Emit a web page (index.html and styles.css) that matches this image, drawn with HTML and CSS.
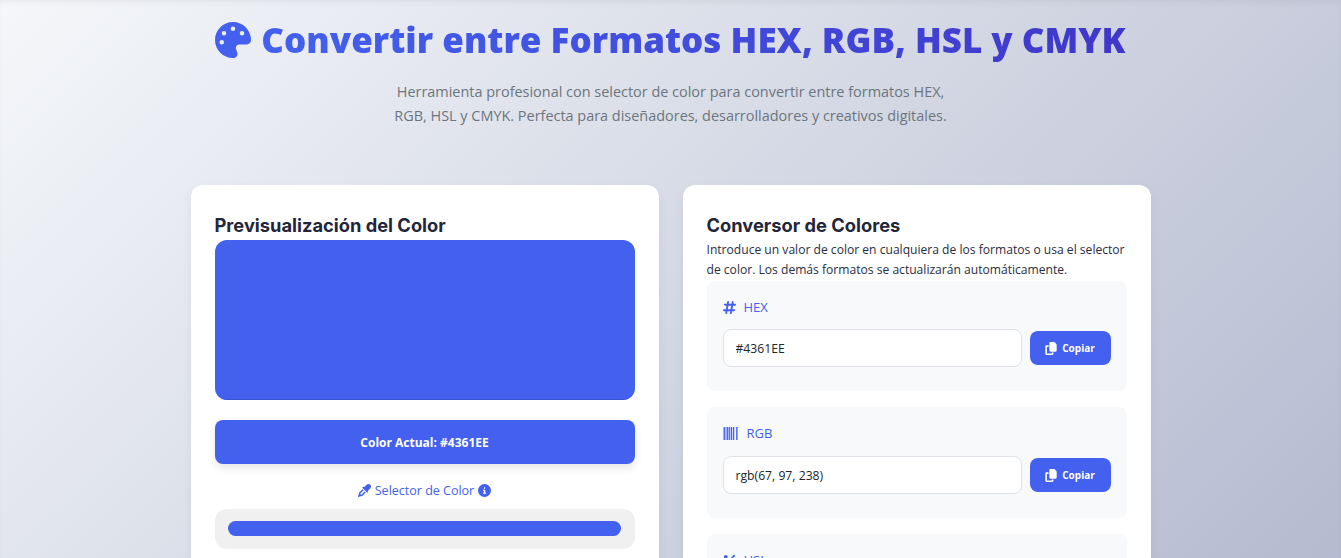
FILE: index.html
```html
<!DOCTYPE html>
<html lang="es">
<head>
    <meta charset="UTF-8">
    <meta name="viewport" content="width=device-width, initial-scale=1.0">
    <title>Convertir entre Formatos HEX, RGB, HSL y CMYK</title>
    <link rel="stylesheet" href="styles.css">
</head>
<body>
    <header class="page-header">
        <h1>
            <svg class="title-icon" viewBox="0 0 512 512" aria-hidden="true"><path d="M512 256c0 .9 0 1.8 0 2.7c-.4 36.5-33.6 61.3-70.1 61.3H344c-26.5 0-48 21.5-48 48c0 3.4 .4 6.7 1 9.9c2.1 10.2 6.5 20 10.8 29.9c6.1 13.8 12.1 27.5 12.1 42c0 31.8-21.6 60.7-53.4 62c-3.5 .1-7 .2-10.6 .2C114.6 512 0 397.4 0 256S114.6 0 256 0S512 114.6 512 256zM128 288a32 32 0 1 0 -64 0 32 32 0 1 0 64 0zm0-96a32 32 0 1 0 0-64 32 32 0 1 0 0 64zM288 96a32 32 0 1 0 -64 0 32 32 0 1 0 64 0zm96 96a32 32 0 1 0 0-64 32 32 0 1 0 0 64z"/></svg>
            <span class="title-text">Convertir entre Formatos HEX, RGB, HSL y CMYK</span>
        </h1>
        <p>Herramienta profesional con selector de color para convertir entre formatos HEX, RGB, HSL y CMYK. Perfecta para diseñadores, desarrolladores y creativos digitales.</p>
    </header>

    <main class="container">
        <section class="card">
            <h2>Previsualización del Color</h2>
            <div class="color-preview"></div>
            <div class="color-current">Color Actual: #4361EE</div>
            <label class="picker-label" for="picker">
                <svg viewBox="0 0 512 512" aria-hidden="true"><path d="M341.600 29.200L240.100 130.800l-9.400-9.400c-12.500-12.500-32.800-12.500-45.300 0s-12.500 32.800 0 45.300l160 160c12.500 12.500 32.800 12.500 45.300 0s12.500-32.800 0-45.300l-9.400-9.400L482.800 170.400c39-39 39-102.200 0-141.100s-102.200-39-141.100 0zM55.400 323.300c-15 15-23.400 35.400-23.400 56.600v42.400L5.400 462.200c-8.500 12.700-6.800 29.600 4 40.400s27.700 12.500 40.400 4L89.700 480h42.400c21.200 0 41.600-8.400 56.600-23.400L309.400 335.900l-45.300-45.300L143.400 411.300c-3 3-7.100 4.700-11.300 4.700H96V379.900c0-4.200 1.700-8.300 4.700-11.300L221.400 247.900l-45.300-45.300L55.400 323.300z"/></svg>
                Selector de Color
                <svg viewBox="0 0 512 512" aria-hidden="true"><path d="M256 512A256 256 0 1 0 256 0a256 256 0 1 0 0 512zM216 336h24V272H216c-13.300 0-24-10.700-24-24s10.700-24 24-24h48c13.300 0 24 10.700 24 24v88h8c13.300 0 24 10.700 24 24s-10.700 24-24 24H216c-13.300 0-24-10.700-24-24s10.700-24 24-24zm40-208a32 32 0 1 1 0 64 32 32 0 1 1 0-64z"/></svg>
            </label>
            <div class="picker-box">
                <div class="picker-bar" id="picker"></div>
            </div>
        </section>

        <section class="card">
            <h2>Conversor de Colores</h2>
            <p class="card-intro">Introduce un valor de color en cualquiera de los formatos o usa el selector de color. Los demás formatos se actualizarán automáticamente.</p>

            <div class="format-group">
                <div class="format-label">
                    <svg class="format-icon" viewBox="0 0 448 512" aria-hidden="true"><path d="M181.300 32.400c17.400 2.900 29.200 19.400 26.300 36.800L197.800 128h95.100l11.500-69.300c2.900-17.400 19.400-29.200 36.800-26.300s29.200 19.400 26.300 36.800L357.800 128H416c17.700 0 32 14.300 32 32s-14.300 32-32 32H347.100L325.800 320H384c17.700 0 32 14.300 32 32s-14.300 32-32 32H315.100l-11.500 69.300c-2.900 17.400-19.400 29.200-36.800 26.300s-29.200-19.400-26.300-36.800l9.800-58.700H155.100l-11.500 69.300c-2.900 17.400-19.400 29.200-36.800 26.300s-29.200-19.400-26.300-36.800L90.200 384H32c-17.700 0-32-14.300-32-32s14.300-32 32-32h68.900l21.300-128H64c-17.700 0-32-14.300-32-32s14.300-32 32-32h68.900l11.500-69.300c2.900-17.400 19.400-29.200 36.800-26.300zM187.100 192L165.800 320h95.100l21.300-128H187.100z"/></svg>
                    HEX
                </div>
                <div class="format-row">
                    <input class="format-input" type="text" value="#4361EE" aria-label="HEX">
                    <button class="copy-btn" type="button">
                        <svg viewBox="0 0 448 512" aria-hidden="true"><path d="M208 0H332.100c12.700 0 24.900 5.100 33.900 14.100l67.900 67.900c9 9 14.100 21.200 14.100 33.900V336c0 26.500-21.500 48-48 48H208c-26.500 0-48-21.500-48-48V48c0-26.500 21.500-48 48-48zM48 128h80v64H64V448H256V416h64v48c0 26.500-21.500 48-48 48H48c-26.500 0-48-21.500-48-48V176c0-26.500 21.500-48 48-48z"/></svg>
                        Copiar
                    </button>
                </div>
            </div>

            <div class="format-group">
                <div class="format-label format-label-rgb">
                    <svg class="format-icon" viewBox="0 0 16 16" aria-hidden="true"><path d="M0 1h1.500v14H0zM2.200 1h1v14h-1zM3.800 1h1.500v14H3.800zM6 1h1v14H6zM7.700 1h1.500v14H7.700zM10 1h1.500v14H10zM13.500 1h1.500v14h-1.500z"/></svg>
                    RGB
                </div>
                <div class="format-row">
                    <input class="format-input" type="text" value="rgb(67, 97, 238)" aria-label="RGB">
                    <button class="copy-btn" type="button">
                        <svg viewBox="0 0 448 512" aria-hidden="true"><path d="M208 0H332.100c12.700 0 24.900 5.100 33.900 14.100l67.900 67.900c9 9 14.100 21.200 14.100 33.900V336c0 26.500-21.500 48-48 48H208c-26.500 0-48-21.500-48-48V48c0-26.500 21.500-48 48-48zM48 128h80v64H64V448H256V416h64v48c0 26.500-21.500 48-48 48H48c-26.500 0-48-21.500-48-48V176c0-26.500 21.500-48 48-48z"/></svg>
                        Copiar
                    </button>
                </div>
            </div>

            <div class="format-group">
                <div class="format-label">
                    <svg class="format-icon" viewBox="0 0 384 512" aria-hidden="true"><path d="M374.600 118.600c12.500-12.500 12.500-32.800 0-45.300s-32.800-12.500-45.300 0l-320 320c-12.500 12.500-12.500 32.800 0 45.300s32.800 12.500 45.300 0l320-320zM128 128A64 64 0 1 0 0 128a64 64 0 1 0 128 0zM384 384a64 64 0 1 0 -128 0 64 64 0 1 0 128 0z"/></svg>
                    HSL
                </div>
            </div>
        </section>
    </main>
</body>
</html>
```

FILE: styles.css
```css
html, body {
    height: 100%;
}
body {
    margin: 0;
    overflow: hidden;
    font-family: "Open Sans", "Noto Sans", sans-serif;
    color: #212529;
    background: linear-gradient(135deg, #f5f7fa 0%, #b5bbd0 100%);
    box-shadow: inset 0 4px 6px -2px rgba(0, 0, 0, 0.06);
}
.page-header {
    text-align: center;
    padding-top: 16px;
}
.page-header h1 {
    display: flex;
    justify-content: center;
    align-items: center;
    gap: 10px;
    margin: 0;
    font-size: 35px;
    line-height: 48px;
    font-weight: 800;
}
.title-icon {
    width: 36px;
    height: 36px;
    fill: #4361ee;
}
.title-text {
    background: linear-gradient(90deg, #4361ee, #3f37c9);
    -webkit-background-clip: text;
    background-clip: text;
    color: transparent;
}
.page-header p {
    width: 570px;
    margin: 16px auto 0;
    font-size: 14.450px;
    line-height: 24px;
    color: #6c757d;
}
.container {
    display: grid;
    grid-template-columns: 468px 468px;
    gap: 24px;
    width: 960px;
    margin: 57px auto 0;
    align-items: start;
}
.card {
    background: #fff;
    border-radius: 12px;
    padding: 24px;
    box-shadow: 0 4px 12px rgba(0, 0, 0, 0.05);
}
.card h2 {
    margin: 6px 0 0;
    font-family: Inter, sans-serif;
    font-size: 18.300px;
    line-height: 20px;
    font-weight: 700;
    color: #23263a;
}
.color-preview {
    height: 159px;
    margin-top: 5px;
    background: #4361ee;
    border-bottom: 1px solid #3a55d0;
    border-radius: 12px;
}
.color-current {
    margin-top: 20px;
    height: 44px;
    line-height: 46px;
    text-align: center;
    font-size: 12px;
    font-weight: 700;
    color: #fff;
    background: #4361ee;
    border-radius: 8px;
    box-shadow: 0 4px 8px rgba(0, 0, 0, 0.1);
}
.picker-label {
    display: flex;
    justify-content: center;
    align-items: center;
    gap: 4px;
    margin-top: 16px;
    height: 20px;
    font-size: 12.500px;
    color: #4361ee;
}
.picker-label svg {
    width: 13px;
    height: 13px;
    fill: #4361ee;
}
.picker-box {
    margin-top: 9px;
    padding: 12px 14px 13px 13px;
    background: #f0f0f0;
    border-radius: 12px;
}
.picker-bar {
    height: 15px;
    background: #4361ee;
    border-radius: 8px;
}
.card-intro {
    margin: 5px 0 0;
    font-size: 12.100px;
    line-height: 20px;
    color: #2b2d42;
}
.format-group {
    padding: 16px 16px 24px;
    margin-bottom: 16px;
    background: #f8f9fa;
    border-radius: 8px;
}
.format-group:first-of-type {
    margin-top: 1px;
}
.format-label {
    display: flex;
    align-items: center;
    gap: 8px;
    height: 20px;
    font-size: 13px;
    font-weight: 500;
    color: #4361ee;
}
.format-icon {
    width: 13px;
    height: 15px;
    fill: #4361ee;
}
.format-label-rgb .format-icon {
    width: 16px;
}
.format-row {
    display: flex;
    align-items: center;
    gap: 8px;
    margin-top: 12px;
}
.format-label-rgb + .format-row {
    margin-top: 13px;
}
.format-input {
    flex: 1;
    min-width: 0;
    height: 38px;
    box-sizing: border-box;
    padding: 0 12px;
    font-family: "Open Sans", sans-serif;
    font-size: 12.200px;
    color: #212529;
    background: #fff;
    border: 1px solid #dee2e6;
    border-radius: 8px;
}
.copy-btn {
    display: flex;
    align-items: center;
    justify-content: center;
    gap: 5px;
    width: 81px;
    height: 34px;
    font-family: "Open Sans", sans-serif;
    font-size: 10px;
    font-weight: 700;
    color: #fff;
    background: #4361ee;
    border: 0;
    border-radius: 8px;
}
.copy-btn svg {
    width: 12px;
    height: 13px;
    fill: #fff;
}
```
